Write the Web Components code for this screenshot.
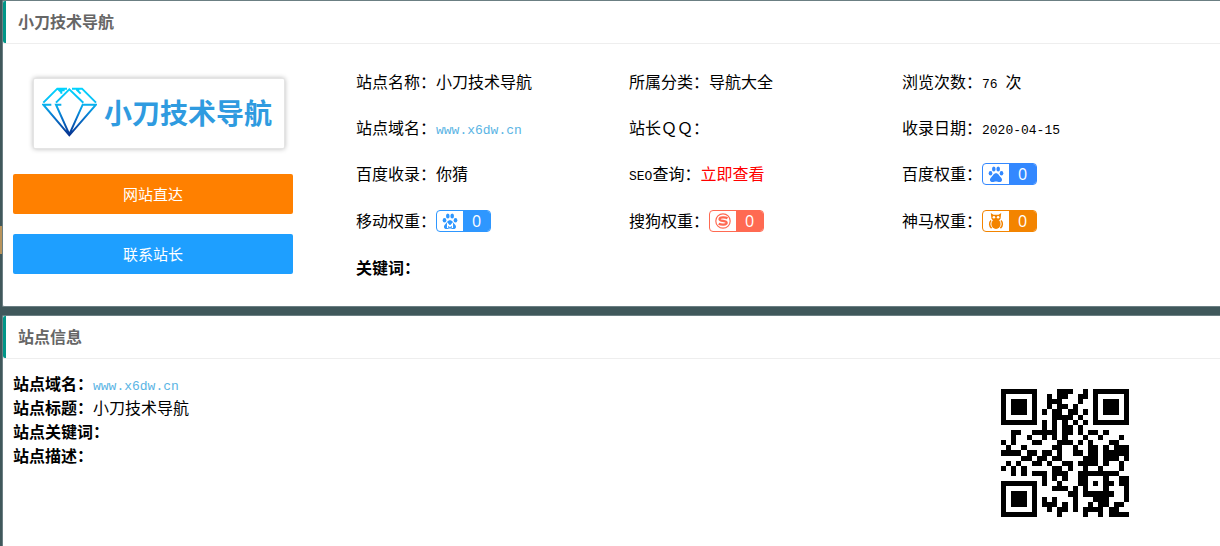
<!DOCTYPE html>
<html lang="zh-CN">
<head>
<meta charset="utf-8">
<meta name="viewport" content="width=device-width, initial-scale=1">
<title>小刀技术导航</title>
<style>
  html { background: #40585b; }
  body {
    margin: 0;
    color: #000;
    font: 16px/24px "Noto Sans CJK SC", sans-serif;
  }
</style>
</head>
<body>
<site-page></site-page>

<script>
const define = (name, html, setup) => {
  const template = document.createElement('template');
  template.innerHTML = html;
  customElements.define(name, class extends HTMLElement {
    constructor() {
      super();
      this.attachShadow({ mode: 'open' }).append(template.content.cloneNode(true));
    }
    connectedCallback() { if (setup) setup(this, this.shadowRoot); }
  });
};

/* Card with a titled header */
define('info-card', `
  <style>
    :host { display: block; box-sizing: border-box; background: #fff; border: 1px solid #6b7f83; border-right: 0; border-radius: 2px 0 0 2px; }
    h2 {
      margin: 0; padding: 0 0 2px 12px; border-left: 3px solid #009688; border-radius: 2px;
      font-size: 16px; line-height: 40px; color: #666; font-weight: 700;
    }
    header { border-bottom: 1px solid #eee; }
  </style>
  <header><h2><slot name="title"></slot></h2></header>
  <slot></slot>`);

/* Site logo: diamond and name */
define('site-logo', `
  <style>
    :host { display: flex; box-sizing: border-box; align-items: center; gap: 7px; height: 71px; padding: 0 8px 3px; background: #fff; border: 1px solid #e4e4e4; border-radius: 2px; box-shadow: 0 0 5px #bbb; }
    svg { flex: none; width: 55px; height: 50px; }
    span { font-size: 28px; line-height: 40px; font-weight: 700; color: #2f9be0; white-space: nowrap; }
  </style>
  <svg viewBox="126 264 165 150" fill="none" stroke="url(#g)" stroke-width="6" aria-hidden="true">
    <defs><linearGradient id="g" gradientUnits="userSpaceOnUse" x1="0" y1="264" x2="0" y2="412">
      <stop offset="0" stop-color="#00d5ff"/><stop offset=".3" stop-color="#08bdf4"/><stop offset=".6" stop-color="#0878cf"/><stop offset="1" stop-color="#062e8c"/>
    </linearGradient></defs>
    <path d="M130 311 172 269H201M168 311 208 271 250 311M216 269H246L288 311M174 270 184 280M184 284V274H194M232 274 242 284M228 272H238M154 317H130L208 409 288 317H248L208 406 168 317H184"/>
  </svg>
  <span><slot></slot></span>`);

define('action-button', `
  <style>
    :host { display: block; }
    button { display: block; width: 100%; height: 40px; padding: 0; border: 0; border-radius: 2px; background: var(--fill); color: #fff; font: inherit; font-size: 15px; cursor: pointer; }
  </style>
  <button type="button"><slot></slot></button>`);

/* One label and value */
define('info-item', `
  <style>
    :host { display: flex; align-items: center; white-space: nowrap; }
    div { display: flex; align-items: baseline; min-height: 24px; }
    ::slotted(*) { flex: none; }
  </style>
  <div><slot></slot></div>`);

const icons = {
  paw: `<ellipse cx="2.5" cy="7.3" rx="1.8" ry="2.2"/><ellipse cx="5.8" cy="3.1" rx="1.8" ry="2.5"/><ellipse cx="10.2" cy="3.1" rx="1.8" ry="2.5"/><ellipse cx="13.5" cy="7.3" rx="1.8" ry="2.2"/><path d="M8 7.3C5.5 7.3 5.3 9.6 3.3 11.2 1.3 12.9 1.5 16 4.5 16 6 16 6.6 15.5 8 15.5S10 16 11.5 16C14.5 16 14.7 12.9 12.7 11.2 10.7 9.6 10.5 7.3 8 7.3Z"/>`,
  sogou: `<circle cx="8" cy="8" r="7.2" fill="none" stroke="currentColor" stroke-width="1.2"/><path d="M12.5 5.2C10.500 4 4.500 3.700 4.500 6.200 4.500 8.600 11.700 7.300 11.700 9.800 11.700 12.200 6 12 3.700 10.700" fill="none" stroke="currentColor" stroke-width="2.2"/>`,
  owl: `<path d="M2.8 0 5.5 1.7H10.5L13.2 0 12.6 5.5 11.5 7H4.5L3.4 5.5Z"/><ellipse cx="8" cy="11" rx="4.6" ry="5"/><path d="M3 7.5C1 9.5 1.200 13.200 3.600 15.200M13 7.500C15 9.500 14.800 13.200 12.400 15.200" fill="none" stroke="currentColor" stroke-width="1.5"/><g fill="#fff"><circle cx="5.9" cy="4.2" r="1.3"/><circle cx="10.1" cy="4.2" r="1.3"/></g>`
};
icons.mobile = icons.paw + `<path d="M5.6 14.9V10.800L8 13.500 10.400 10.800V14.900" fill="none" stroke="#fff" stroke-width="1.3"/>`;

/* Search-engine rank badge */
define('rank-badge', `
  <style>
    :host { display: flex; box-sizing: border-box; align-self: flex-end; width: 55px; height: 22px; border: 1px solid currentColor; border-radius: 4px; background: #fff; overflow: hidden; }
    svg { flex: 1; height: 16px; align-self: center; fill: currentColor; }
    div { width: 27px; background: currentColor; text-align: center; font: 16px/20px "Open Sans", sans-serif; }
    span { display: block; color: #fff; }
  </style>
  <svg viewBox="0 0 16 16" aria-hidden="true"></svg><div><span><slot></slot></span></div>`,
  (el, root) => { root.querySelector('svg').innerHTML = icons[el.getAttribute('icon')]; });

/* QR code, version 2 with error correction level H (up to 14 bytes) */
function qrModules(text) {
  const size = 25, dataLen = 16, ecLen = 28;
  const bytes = [...new TextEncoder().encode(text)];
  let bits = '0100' + bytes.length.toString(2).padStart(8, '0') + bytes.map(b => b.toString(2).padStart(8, '0')).join('') + '0000';
  bits = bits.slice(0, dataLen * 8);
  while (bits.length % 8) bits += '0';
  const data = bits.match(/.{8}/g).map(b => parseInt(b, 2));
  for (let i = 0; data.length < dataLen; i++) data.push(i % 2 ? 0x11 : 0xec);

  const mul = (a, b) => {
    let r = 0;
    for (; b; b >>= 1) { if (b & 1) r ^= a; a <<= 1; if (a & 256) a ^= 0x11d; }
    return r;
  };
  let gen = [1];
  for (let i = 0, root = 1; i < ecLen; i++, root = mul(root, 2)) {
    const next = [...gen, 0];
    gen.forEach((g, j) => next[j + 1] ^= mul(g, root));
    gen = next;
  }
  const rem = [...data, ...Array(ecLen).fill(0)];
  for (let i = 0; i < dataLen; i++) {
    const f = rem[i];
    gen.forEach((g, j) => rem[i + j] ^= mul(g, f));
  }
  const stream = [...data, ...rem.slice(dataLen)].map(b => b.toString(2).padStart(8, '0')).join('');

  const m = Array.from({ length: size }, () => Array(size).fill(null));
  const square = (row, col, reach, dark) => {
    for (let y = -reach; y <= reach; y++) for (let x = -reach; x <= reach; x++) {
      if (m[row + y] && m[row + y][col + x] !== undefined) m[row + y][col + x] = dark(Math.max(Math.abs(x), Math.abs(y)));
    }
  };
  for (const [r, c] of [[3, 3], [3, size - 4], [size - 4, 3]]) square(r, c, 4, d => d !== 2 && d !== 4);
  square(18, 18, 2, d => d !== 1);
  for (let i = 8; i < size - 8; i++) m[6][i] = m[i][6] = i % 2 === 0;
  [...'001100111010000'].forEach((bit, i) => {
    const on = bit === '1';
    if (i < 6) m[8][i] = on;
    else if (i === 6) m[8][7] = on;
    else if (i === 7) m[8][8] = on;
    else if (i === 8) m[7][8] = on;
    else m[14 - i][8] = on;
    if (i < 7) m[size - 1 - i][8] = on; else m[8][size - 15 + i] = on;
  });
  m[size - 8][8] = true;

  let n = 0, up = true;
  for (let col = size - 1; col > 0; col -= 2) {
    if (col === 6) col--;
    for (let i = 0; i < size; i++) {
      const row = up ? size - 1 - i : i;
      for (const c of [col, col - 1]) {
        if (m[row][c] !== null) continue;
        m[row][c] = (stream[n++] === '1') !== ((row + c) % 3 === 0);
      }
    }
    up = !up;
  }
  return m;
}
define('qr-code', `
  <style>:host { display: block; width: 128px; height: 128px; } svg { display: block; width: 100%; height: 100%; }</style>
  <svg viewBox="0 0 25 25" shape-rendering="crispEdges" role="img" aria-label="二维码"><path/></svg>`,
  (el, root) => {
    const d = qrModules(el.getAttribute('value')).map((row, y) => row.map((on, x) => on ? `M${x} ${y}h1v1h-1z` : '').join('')).join('');
    root.querySelector('path').setAttribute('d', d);
  });

define('site-page', `
  <style>
    :host { display: flex; flex-direction: column; gap: 8px; box-sizing: border-box; min-height: 100vh; padding-left: 2px; background: linear-gradient(#b8945c, #b8945c) 0 226px / 2px 28px no-repeat; }
    info-card:last-child { flex: 1; border-bottom: 0; border-radius: 2px 0 0; }
    .overview { display: grid; grid-template-columns: 280px 1fr; gap: 63px; padding: 14px 45px 16px 10px; }
    .side { display: flex; flex-direction: column; gap: 20px; padding-top: 20px; }
    site-logo { margin: 0 8px 5px 20px; }
    .facts { display: grid; grid-template-columns: repeat(3, 1fr); grid-template-rows: 46px 46px 46px 48px 46px; }
    .about { display: flex; justify-content: space-between; padding: 12px 91px 24px 10px; }
    qr-code { margin-top: 18px; }
    a { color: #5ab4e4; text-decoration: none; }
    .latin { font: 13px/16px "Liberation Mono", monospace; }
    .hot { color: #f00; }
  </style>
  <info-card>
    <span slot="title">小刀技术导航</span>
    <div class="overview">
      <div class="side">
        <site-logo>小刀技术导航</site-logo>
        <action-button style="--fill:#ff8000">网站直达</action-button>
        <action-button style="--fill:#1e9fff">联系站长</action-button>
      </div>
      <div class="facts">
        <info-item><span>站点名称：</span><span>小刀技术导航</span></info-item>
        <info-item><span>所属分类：</span><span>导航大全</span></info-item>
        <info-item><span>浏览次数：</span><span><span class="latin">76 </span>次</span></info-item>
        <info-item><span>站点域名：</span><a class="latin" href="#site">www.x6dw.cn</a></info-item>
        <info-item><span>站长ＱＱ：</span></info-item>
        <info-item><span>收录日期：</span><span class="latin">2020-04-15</span></info-item>
        <info-item><span>百度收录：</span><span>你猜</span></info-item>
        <info-item><span><span class="latin">SEO</span>查询：</span><a class="hot" href="#seo">立即查看</a></info-item>
        <info-item><span>百度权重：</span><rank-badge icon="paw" style="color:#3388ff">0</rank-badge></info-item>
        <info-item><span>移动权重：</span><rank-badge icon="mobile" style="color:#2e97ff">0</rank-badge></info-item>
        <info-item><span>搜狗权重：</span><rank-badge icon="sogou" style="color:#ff6a52">0</rank-badge></info-item>
        <info-item><span>神马权重：</span><rank-badge icon="owl" style="color:#f38400">0</rank-badge></info-item>
        <info-item><strong>关键词：</strong></info-item>
      </div>
    </div>
  </info-card>
  <info-card>
    <span slot="title">站点信息</span>
    <div class="about">
      <div>
        <info-item><strong>站点域名：</strong><a class="latin" href="#site">www.x6dw.cn</a></info-item>
        <info-item><strong>站点标题：</strong><span>小刀技术导航</span></info-item>
        <info-item><strong>站点关键词：</strong></info-item>
        <info-item><strong>站点描述：</strong></info-item>
      </div>
      <qr-code value="www.x6dw.cn"></qr-code>
    </div>
  </info-card>`);
</script>
</body>
</html>
